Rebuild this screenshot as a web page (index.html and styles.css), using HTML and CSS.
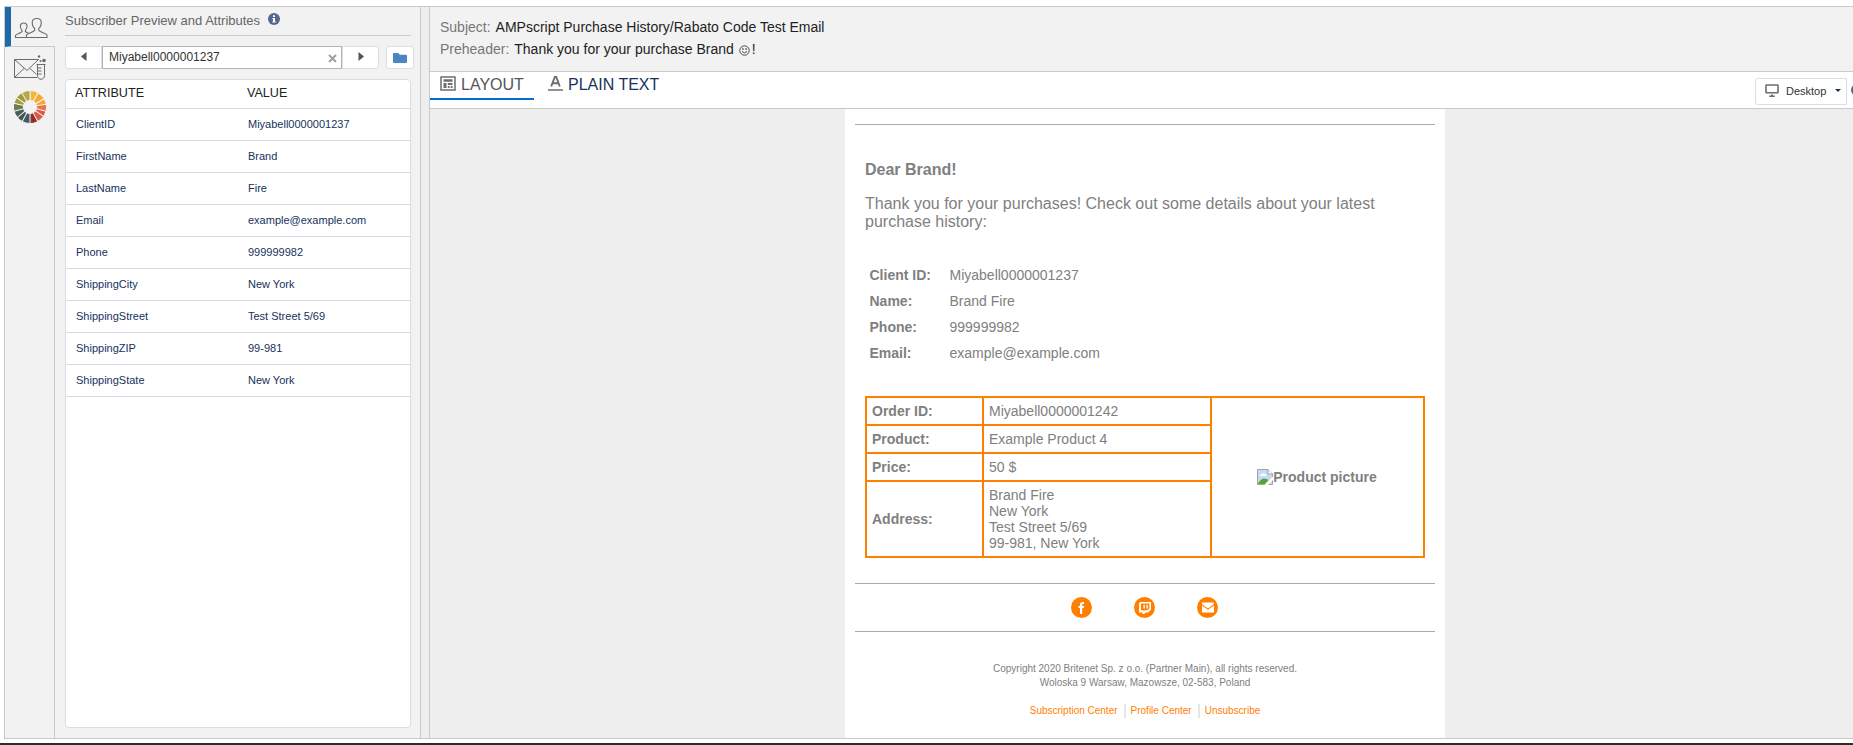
FILE: index.html
```html
<!DOCTYPE html>
<html lang="en">
<head>
<meta charset="utf-8">
<title>Preview and Test</title>
<link rel="stylesheet" href="styles.css">
</head>
<body>
<div class="app">
  <nav class="rail">
    <a class="rail-item active">
      <svg width="34" height="24" viewBox="0 0 34 24" fill="none" stroke="#6b6b6b" stroke-width="1.1">
        <path d="M12.500 20.500h20.500v-2.500c0-1.500-6.500-2.500-8.200-4.600v-2c1.700-1.400 2.700-4 2.400-6.700C27 2.500 25.300 1.500 22.800 1.500s-4.300 1-4.500 3.200c-.3 2.700.7 5.300 2.400 6.700v2c-1.700 2.100-8.200 3.100-8.200 4.600z"/>
        <path d="M12.500 20.500h-11v-2c0-1 5-2.300 6.500-3.900v-1.300c-1.200-1.100-1.800-2.900-1.600-4.700C6.600 6.900 7.800 6 9.700 6s3.100.9 3.300 2.600c.2 1.800-.4 3.600-1.600 4.700v1.300l3 1.700"/>
      </svg>
    </a>
    <a class="rail-item">
      <svg width="34" height="26" viewBox="0 0 34 26" fill="none" stroke="#6b6b6b">
        <path d="M24.500 4.500H.5v18H23M.5 4.500l12.500 11 11.500-11M.5 22.500l9.500-9M22.500 19.500l-6.500-6"/>
        <path d="M22.500 9.500h9M23.500 9.500v11c0 5 7 5 7 0v-11M23.500 13h4M23.500 16h4M23.500 19h4"/>
        <g fill="#6b6b6b" stroke="none"><circle cx="25" cy="1.500" r="1.200"/><circle cx="30" cy="5.500" r="1.800"/><circle cx="26.500" cy="6" r="1"/></g>
      </svg>
    </a>
    <a class="rail-item wheel">
      <svg width="34" height="34" viewBox="-17 -17 34 34">
        <g stroke="#f2f2f2" stroke-width="1">
          <path fill="#efb935" d="M0-16.500A16.500 16.500 0 0 1 8.250-14.290L3.300-5.700A6.600 6.600 0 0 0 0-6.600z"/>
          <path fill="#f8a933" transform="rotate(30)" d="M0-16.500A16.500 16.500 0 0 1 8.250-14.290L3.300-5.700A6.600 6.600 0 0 0 0-6.600z"/>
          <path fill="#f8a52f" transform="rotate(60)" d="M0-16.500A16.500 16.500 0 0 1 8.250-14.290L3.300-5.700A6.600 6.600 0 0 0 0-6.600z"/>
          <path fill="#ef7340" transform="rotate(80)" d="M0-16.500A16.500 16.500 0 0 1 8.250-14.290L3.300-5.700A6.600 6.600 0 0 0 0-6.600z"/>
          <path fill="#dd5846" transform="rotate(105)" d="M0-16.500A16.500 16.500 0 0 1 8.250-14.290L3.300-5.700A6.600 6.600 0 0 0 0-6.600z"/>
          <path fill="#dd5846" transform="rotate(125)" d="M0-16.500A16.500 16.500 0 0 1 8.250-14.290L3.300-5.700A6.600 6.600 0 0 0 0-6.600z"/>
          <path fill="#8f2f27" transform="rotate(152)" d="M0-16.500A16.500 16.500 0 0 1 8.250-14.290L3.300-5.700A6.600 6.600 0 0 0 0-6.600z"/>
          <path fill="#465766" transform="rotate(180)" d="M0-16.500A16.500 16.500 0 0 1 8.250-14.290L3.300-5.700A6.600 6.600 0 0 0 0-6.600z"/>
          <path fill="#44585a" transform="rotate(208)" d="M0-16.500A16.500 16.500 0 0 1 8.250-14.290L3.300-5.700A6.600 6.600 0 0 0 0-6.600z"/>
          <path fill="#4a5f55" transform="rotate(230)" d="M0-16.500A16.500 16.500 0 0 1 8.250-14.290L3.300-5.700A6.600 6.600 0 0 0 0-6.600z"/>
          <path fill="#6a7d4c" transform="rotate(255)" d="M0-16.500A16.500 16.500 0 0 1 8.250-14.290L3.300-5.700A6.600 6.600 0 0 0 0-6.600z"/>
          <path fill="#a59a40" transform="rotate(283)" d="M0-16.500A16.500 16.500 0 0 1 8.250-14.290L3.300-5.700A6.600 6.600 0 0 0 0-6.600z"/>
          <path fill="#a59a40" transform="rotate(305)" d="M0-16.500A16.500 16.500 0 0 1 8.250-14.290L3.300-5.700A6.600 6.600 0 0 0 0-6.600z"/>
          <path fill="#b5a945" transform="rotate(330)" d="M0-16.500A16.500 16.500 0 0 1 8.250-14.290L3.300-5.700A6.600 6.600 0 0 0 0-6.600z"/>
        </g>
      </svg>
    </a>
  </nav>

  <section class="panel">
    <h1 class="panel-title"><span>Subscriber Preview and Attributes</span>
      <svg width="12" height="12" viewBox="0 0 12 12"><circle cx="6" cy="6" r="6" fill="#54698d"/><path fill="#fff" d="M5 2.300h2v1.600H5zM4.500 5H7v3.400h.8v1H4.300v-1H5V6h-.5z"/></svg>
    </h1>
    <div class="picker">
      <button class="step prev"><svg width="6" height="9" viewBox="0 0 6 9"><path fill="#555" d="M5.500 0v9L0 4.500z"/></svg></button>
      <div class="field"><span>Miyabell0000001237</span><svg width="9" height="9" viewBox="0 0 9 9"><path d="M1 1l7 7M8 1L1 8" stroke="#a0a0a0" stroke-width="2"/></svg></div>
      <button class="step next"><svg width="6" height="9" viewBox="0 0 6 9"><path fill="#555" d="M.5 0v9L6 4.500z"/></svg></button>
      <button class="folder"><svg width="14" height="10" viewBox="0 0 14 10"><path fill="#4a86bf" d="M1 0h4.500l1.200 1.800H13q1 0 1 1V9q0 1-1 1H1Q0 10 0 9V1q0-1 1-1z"/></svg></button>
    </div>
    <div class="attributes">
      <div class="row head"><span>ATTRIBUTE</span><span>VALUE</span></div>
      <div class="row"><span>ClientID</span><span>Miyabell0000001237</span></div>
      <div class="row"><span>FirstName</span><span>Brand</span></div>
      <div class="row"><span>LastName</span><span>Fire</span></div>
      <div class="row"><span>Email</span><span>example@example.com</span></div>
      <div class="row"><span>Phone</span><span>999999982</span></div>
      <div class="row"><span>ShippingCity</span><span>New York</span></div>
      <div class="row"><span>ShippingStreet</span><span>Test Street 5/69</span></div>
      <div class="row"><span>ShippingZIP</span><span>99-981</span></div>
      <div class="row"><span>ShippingState</span><span>New York</span></div>
    </div>
  </section>

  <div class="splitter"></div>

  <main class="preview">
    <header class="meta">
      <p><span class="label">Subject:</span><span class="subject">AMPscript Purchase History/Rabato Code Test Email</span></p>
      <p><span class="label">Preheader:</span><span class="preheader">Thank you for your purchase Brand <svg class="smile" width="11" height="11" viewBox="0 0 11 11"><circle cx="5.500" cy="5.500" r="4.700" fill="none" stroke="#222" stroke-width=".8"/><path d="M3 6.500q2.500 2.700 5 0" fill="none" stroke="#222" stroke-width=".8"/><circle cx="3.900" cy="4" r=".7"/><circle cx="7.100" cy="4" r=".7"/></svg>!</span></p>
    </header>
    <div class="tabs">
      <a class="tab selected">
        <svg width="16" height="15" viewBox="0 0 16 15"><path d="M1 1h14v13H1z" fill="none" stroke="#706e6b" stroke-width="1.500"/><path fill="#706e6b" d="M3.500 3.300h9v2.400h-9zM3.500 7h3v5h-3zM7.800 7h4.700v2H7.800zM7.800 10h1.800v2H7.800zM10.700 10h1.800v2h-1.800z"/></svg>
        <span>LAYOUT</span>
      </a>
      <a class="tab">
        <svg width="15" height="15" viewBox="0 0 15 15" fill="none" stroke="#706e6b"><path d="M3.200 10.500L6.800 1h1.400l3.600 9.500M4.800 7.300h5.400" stroke-width="1.900"/><path d="M0 14h15" stroke-width="1.500"/></svg>
        <span>PLAIN TEXT</span>
      </a>
      <div class="tools">
        <button class="device">
          <svg width="14" height="13" viewBox="0 0 14 13"><rect x="1" y="1" width="12" height="7.800" rx=".5" fill="none" stroke="#706e6b" stroke-width="1.600"/><path fill="#706e6b" d="M6 10.500h2v1h1.800V13H4.200v-1.500H6z"/></svg>
          <span>Desktop</span>
          <i class="caret"></i>
        </button>
        <i class="dot"></i>
      </div>
    </div>

    <div class="canvas">
      <article class="mail">
        <div class="rule first"></div>
        <div class="copy">
          <h2>Dear Brand!</h2>
          <p>Thank you for your purchases! Check out some details about your latest purchase history:</p>
          <dl class="client">
            <dt>Client ID:</dt><dd>Miyabell0000001237</dd>
            <dt>Name:</dt><dd>Brand Fire</dd>
            <dt>Phone:</dt><dd>999999982</dd>
            <dt>Email:</dt><dd>example@example.com</dd>
          </dl>
          <table class="order">
            <colgroup><col class="c1"><col class="c2"><col class="c3"></colgroup>
            <tr><th>Order ID:</th><td>Miyabell0000001242</td>
              <th rowspan="4" class="pic"><div><svg width="16" height="16" viewBox="0 0 16 16"><path d="M.5.500h10.500l4.500 4.500v10.500H.5z" fill="#c6d9f5" stroke="#a3a3a3"/><path d="M11 .5V5h4.500" fill="#fff" stroke="#a3a3a3"/><path d="M3 7q0-2 2-2 1-2 3 0 2 0 1.500 2z" fill="#fff"/><path d="M1 15q2-5 6-5.500 3 0 4.500 1.500L8 15z" fill="#55a630"/><path d="M7.500 16L16 7.500V11l-5 5z" fill="#fff"/></svg><span>Product picture</span></div></th></tr>
            <tr><th>Product:</th><td>Example Product 4</td></tr>
            <tr><th>Price:</th><td>50 $</td></tr>
            <tr><th>Address:</th><td>Brand Fire<br>New York<br>Test Street 5/69<br>99-981, New York</td></tr>
          </table>
        </div>
        <div class="social">
          <svg width="21" height="21" viewBox="0 0 21 21"><circle cx="10.500" cy="10.500" r="10.500" fill="#ff8000"/><path fill="#fff" d="M9 17v-6H7.500V9H9V7.500Q9 5 11.500 5H13v2h-1q-.8 0-.8.900V9H13l-.3 2h-1.500v6z"/></svg>
          <svg width="21" height="21" viewBox="0 0 21 21"><circle cx="10.500" cy="10.500" r="10.500" fill="#ff8000"/><path fill="#fff" fill-rule="evenodd" d="M6 5h11v7.500L14 15.500h-2.200L10 17H8.500v-1.500H5V7zM7 6.500v6.800h2.500v1.300l1.400-1.300h2.600l1.900-1.800v-5zM9.500 7.800h1.300v3.700H9.500zM12.500 7.800h1.300v3.700h-1.300z"/></svg>
          <svg width="21" height="21" viewBox="0 0 21 21"><circle cx="10.500" cy="10.500" r="10.500" fill="#ff8000"/><path fill="#fff" d="M5.300 5.500h11.400v1.700L11 11.400 5 7.200V5.500zM5 8.600l6 4.200 6-4.200v6.900H5z"/></svg>
        </div>
        <footer class="legal">
          <p>Copyright 2020 Britenet Sp. z o.o. (Partner Main), all rights reserved.</p>
          <p>Woloska 9 Warsaw, Mazowsze, 02-583, Poland</p>
          <nav><a>Subscription Center</a><a>Profile Center</a><a>Unsubscribe</a></nav>
        </footer>
      </article>
    </div>
  </main>
</div>
<div class="taskbar"></div>
</body>
</html>
```
FILE: styles.css
```css
* { box-sizing: border-box; }
body {
  margin: 0;
  height: 745px;
  overflow: hidden;
  display: flex;
  flex-direction: column;
  background: #fff;
  font-family: "Liberation Sans", Arial, sans-serif;
}
h1, h2, p, dl, dd { margin: 0; }
button { font: inherit; padding: 0; }
svg { display: block; flex: none; }
span { white-space: nowrap; }

.app {
  display: flex;
  height: 733px;
  margin: 6px 0 0 4px;
  border: 1px solid #c9c9c9;
  border-right: 0;
  background: #f2f2f2;
}
.taskbar {
  height: 2px;
  margin-top: 4px;
  background: #2b2b2b;
}

/* Icon rail */
.rail { width: 50px; flex: none; border-right: 1px solid #c9c9c9; }
.rail-item { display: flex; height: 40px; padding: 8px 0 0 9px; }
.rail-item.active {
  width: 50px;
  padding: 10px 0 0 3px;
  border-left: 6px solid #1f69a8;
  border-bottom: 1px solid #c9c9c9;
  background: #f2f2f2;
}
.rail-item.wheel { padding: 3px 0 0 8px; }

/* Subscriber panel */
.panel {
  width: 365px;
  flex: none;
  display: flex;
  flex-direction: column;
  padding: 0 8px 10px 10px;
}
.panel-title {
  display: flex;
  align-items: flex-start;
  gap: 8px;
  width: 346px;
  height: 29px;
  padding-top: 6px;
  border-bottom: 1px solid #c9c9c9;
  color: #666;
  font-size: 13px;
  font-weight: 400;
  line-height: 15px;
}
.picker { display: flex; height: 23px; margin-top: 10px; }
.picker > * { flex: none; }
.picker button {
  display: flex;
  align-items: center;
  justify-content: center;
  border: 1px solid #d8dde6;
  background: #fff;
}
.picker .prev { width: 37px; border-radius: 3px 0 0 3px; padding-bottom: 3px; }
.picker .next { width: 37px; border-radius: 0 3px 3px 0; padding-bottom: 3px; }
.picker .folder { width: 28px; margin-left: 7px; border-radius: 3px; }
.field {
  display: flex;
  justify-content: space-between;
  width: 240px;
  padding: 3px 4px 0 6px;
  border: 1px solid #b4b4b4;
  background: #fff;
  color: #333;
  font-size: 12px;
  line-height: 14px;
}
.field svg { margin-top: 4px; }
.attributes {
  flex: 1;
  width: 346px;
  margin-top: 10px;
  border: 1px solid #d8dde6;
  border-radius: 4px;
  background: #fff;
}
.row {
  display: grid;
  grid-template-columns: 172px 1fr;
  align-items: center;
  height: 32px;
  padding: 0 0 1px 10px;
  border-bottom: 1px solid #d8dbe6;
  color: #16325c;
  font-size: 11px;
}
.row.head {
  height: 29px;
  padding: 0 0 2px 9px;
  color: #222;
  font-size: 12.600px;
}

.splitter {
  width: 10px;
  flex: none;
  border: 1px solid #c9c9c9;
  border-width: 0 1px;
  background: #eee;
}

/* Message preview */
.preview { flex: 1; min-width: 0; display: flex; flex-direction: column; }
.meta {
  height: 65px;
  padding: 9px 0 0 10px;
  border-bottom: 1px solid #c9c9c9;
  font-size: 14px;
  line-height: 22px;
  color: #222;
}
.meta p { display: flex; gap: 5px; }
.meta .label { color: #777; }
.smile { display: inline-block; margin: 0 2px 0 1px; vertical-align: -2px; }
.tabs {
  display: flex;
  height: 37px;
  border-bottom: 1px solid #c9c9c9;
  background: #fff;
}
.tab {
  display: flex;
  gap: 5px;
  height: 28px;
  padding: 4px 0 0 14px;
  color: #16325c;
  font-size: 16px;
  line-height: 18px;
}
.tab.selected {
  width: 104px;
  padding-left: 10px;
  border-bottom: 2px solid #0070d2;
  color: #54565b;
}
.tools { display: flex; margin: 6px 0 0 auto; overflow: hidden; }
.device {
  display: flex;
  align-items: center;
  width: 92px;
  height: 27px;
  padding: 0 0 2px 9px;
  border: 1px solid #d8dde6;
  border-radius: 3px 0 0 3px;
  background: #fff;
  color: #333;
  font-size: 11px;
}
.device span { margin-left: 7px; }
.caret {
  margin-left: 9px;
  border: 3px solid transparent;
  border-top-color: #16325c;
  border-bottom: 0;
}
.dot {
  width: 12px;
  height: 12px;
  margin: 6px -10px 0 4px;
  border-radius: 50%;
  background: #54698d;
}

.canvas { flex: 1; background: #eee; padding-left: 415px; }
.mail {
  width: 600px;
  height: 100%;
  padding: 0 10px;
  background: #fff;
  color: #808080;
}
.rule { padding-top: 15px; border-bottom: 1px solid #aaa; }
.copy { padding: 36px 10px 0; }
.copy h2 { font-size: 16px; line-height: 18px; }
.copy p { margin-top: 16px; font-size: 16px; line-height: 18px; }
.client {
  display: grid;
  grid-template-columns: 80px 1fr;
  margin: 31px 0 30px 4.500px;
  font-size: 14px;
  line-height: 26px;
}
.client dt { font-weight: 700; }
.order {
  width: 560px;
  table-layout: fixed;
  border-collapse: collapse;
  font-size: 14px;
  line-height: 16px;
}
.order th, .order td {
  padding: 5px;
  border: 2px solid #ff8000;
  text-align: left;
}
.c1 { width: 117px; }
.c2 { width: 228px; }
.order .pic div { display: flex; justify-content: center; margin-right: 1px; }
.social {
  display: flex;
  justify-content: center;
  align-items: center;
  gap: 42px;
  height: 49px;
  margin-top: 25px;
  padding-right: 1px;
  border: 1px solid #aaa;
  border-width: 1px 0;
}
.legal {
  padding-top: 30px;
  font-size: 10px;
  line-height: 14px;
  text-align: center;
}
.legal nav { display: flex; justify-content: center; margin-top: 14px; color: #ff8000; }
.legal a + a { margin-left: 6px; padding-left: 5px; border-left: 2px solid #e6e6e6; }
```
